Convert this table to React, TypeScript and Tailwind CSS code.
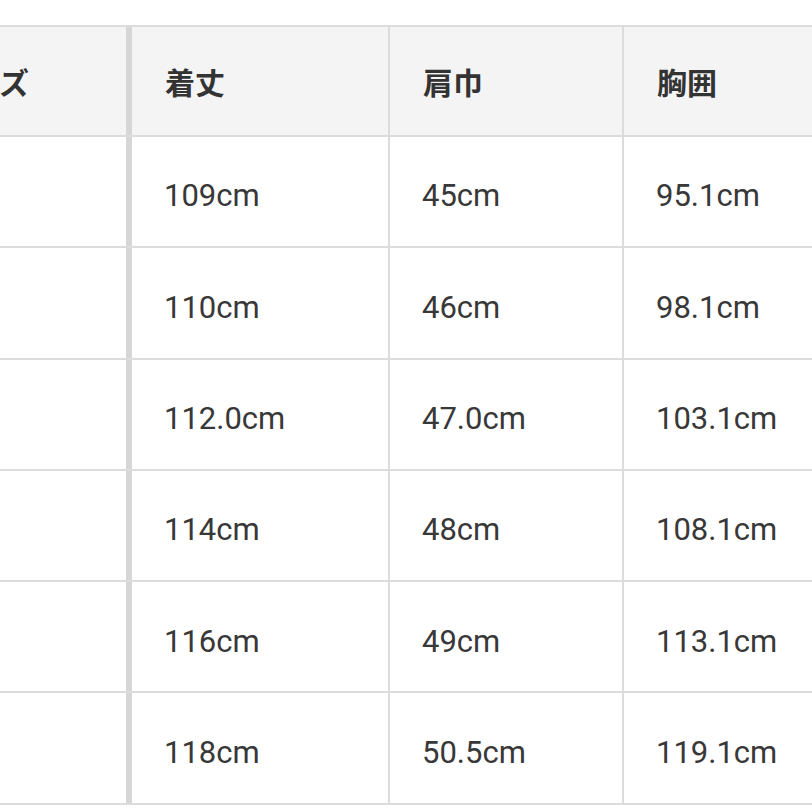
const headers = ["着丈", "肩巾", "胸囲"];

const rows = [
  ["109cm", "45cm", "95.1cm"],
  ["110cm", "46cm", "98.1cm"],
  ["112.0cm", "47.0cm", "103.1cm"],
  ["114cm", "48cm", "108.1cm"],
  ["116cm", "49cm", "113.1cm"],
  ["118cm", "50.5cm", "119.1cm"],
];

const widths = ["w-[258px]", "w-[234px]", "w-[260px]"];

export default function App() {
  return (
    <div className="w-[812px] h-[812px] overflow-hidden bg-white pt-[25px]">
      <div className="ml-[-94px] w-[1000px] border-t-2 border-[#dcdcdc] text-[#333333]">
        {/* ヘッダー */}
        <div className="flex h-[110px] bg-[#f4f4f4] border-b-2 border-[#dcdcdc] font-bold text-[30px] [font-family:'Noto_Sans_CJK_JP',sans-serif]">
          <div className="w-[226px] shrink-0 border-r-[6px] border-[#d6d6d6] flex items-center pl-[34px]">
            サイズ
          </div>
          {headers.map((h, i) => (
            <div
              key={h}
              className={`${widths[i]} shrink-0 border-r-2 border-[#dcdcdc] flex items-center pl-[33px]`}
            >
              {h}
            </div>
          ))}
        </div>

        {/* 寸法 */}
        {rows.map((r, ri) => (
          <div
            key={ri}
            className="flex h-[111.3px] bg-white border-b-2 border-[#dcdcdc] text-[31px] text-[#383838] [font-family:Roboto,'Noto_Sans_CJK_JP',sans-serif]"
          >
            <div className="w-[226px] shrink-0 border-r-[6px] border-[#d6d6d6]" />
            {r.map((v, i) => (
              <div
                key={i}
                className={`${widths[i]} shrink-0 border-r-2 border-[#dcdcdc] flex items-center pl-[32px] pt-[10px]`}
              >
                {v}
              </div>
            ))}
          </div>
        ))}
      </div>
    </div>
  );
}
